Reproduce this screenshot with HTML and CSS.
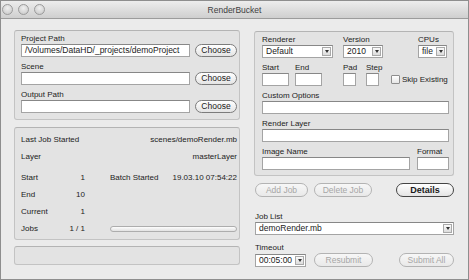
FILE: index.html
```html
<!DOCTYPE html>
<html lang="en">
<head>
    <meta charset="UTF-8">
    <title>RenderBucket</title>
    <link rel="stylesheet" href="styles.css">
</head>
<body>
    <div class="window">
      <div class="titlebar">
        <div class="lights"><span></span><span></span><span></span></div>
        <div class="title">RenderBucket</div>
        <div></div>
      </div>

      <div class="content">
        <div class="left">
          <div class="group paths">
            <div class="field">
              <label>Project Path</label>
              <div class="row">
                <div class="input path">/Volumes/DataHD/_projects/demoProject</div>
                <div class="btn choose">Choose</div>
              </div>
            </div>
            <div class="field">
              <label>Scene</label>
              <div class="row">
                <div class="input path"></div>
                <div class="btn choose">Choose</div>
              </div>
            </div>
            <div class="field">
              <label>Output Path</label>
              <div class="row">
                <div class="input path"></div>
                <div class="btn choose">Choose</div>
              </div>
            </div>
          </div>

          <div class="group status">
            <div class="line">
              <span>Last Job Started</span>
              <span class="value">scenes/demoRender.mb</span>
            </div>
            <div class="line">
              <span>Layer</span>
              <span class="value">masterLayer</span>
            </div>
            <div class="line first">
              <span class="key">Start</span><span class="num">1</span>
              <span class="batch">Batch Started</span>
              <span class="value">19.03.10 07:54:22</span>
            </div>
            <div class="line">
              <span class="key">End</span><span class="num">10</span>
            </div>
            <div class="line">
              <span class="key">Current</span><span class="num">1</span>
            </div>
            <div class="line">
              <span class="key">Jobs</span><span class="num">1 / 1</span>
              <div class="progress"></div>
            </div>
          </div>

          <div class="group statusbar"></div>
        </div>

        <div class="right">
          <div class="group settings">
            <div class="cols">
              <div class="col c-renderer">
                <label>Renderer</label>
                <div class="select s-renderer"><span>Default</span><i></i></div>
              </div>
              <div class="col c-version">
                <label>Version</label>
                <div class="select s-version"><span>2010</span><i></i></div>
              </div>
              <div class="col">
                <label>CPUs</label>
                <div class="select s-cpus"><span>file</span><i></i></div>
              </div>
            </div>

            <div class="cols">
              <div class="col c-start">
                <label>Start</label>
                <div class="input frame"></div>
              </div>
              <div class="col c-end">
                <label>End</label>
                <div class="input frame"></div>
              </div>
              <div class="col c-pad">
                <label>Pad</label>
                <div class="input tiny"></div>
              </div>
              <div class="col c-step">
                <label>Step</label>
                <div class="input tiny"></div>
              </div>
              <div class="skip">
                <span class="checkbox"></span>
                <span>Skip Existing</span>
              </div>
            </div>

            <div class="field">
              <label>Custom Options</label>
              <div class="input full"></div>
            </div>

            <div class="field">
              <label>Render Layer</label>
              <div class="input full"></div>
            </div>

            <div class="cols">
              <div class="col c-image">
                <label>Image Name</label>
                <div class="input image"></div>
              </div>
              <div class="col">
                <label>Format</label>
                <div class="input format"></div>
              </div>
            </div>
          </div>

          <div class="actions">
            <div class="btn disabled add">Add Job</div>
            <div class="btn disabled delete">Delete Job</div>
            <div class="btn details">Details</div>
          </div>

          <label class="outer">Job List</label>
          <div class="select joblist"><span>demoRender.mb</span><i></i></div>

          <label class="outer timeout-label">Timeout</label>
          <div class="actions bottom">
            <div class="select s-timeout"><span>00:05:00</span><i></i></div>
            <div class="btn disabled resubmit">Resubmit</div>
            <div class="btn disabled submit">Submit All</div>
          </div>
        </div>
      </div>
    </div>
</body>
</html>
```

FILE: styles.css
```css
* {
    box-sizing: border-box;
}

body {
    margin: 0;
    font-family: "Liberation Sans", Arial, sans-serif;
    font-size: 8px;
    color: #222;
    background: #fff;
}

.window {
    width: 469px;
    height: 280px;
    background: #ebebeb;
    border: 1px solid #8e8e8e;
    display: flex;
    flex-direction: column;
}

/* title bar */
.titlebar {
    height: 18px;
    flex: none;
    background: linear-gradient(#ededed, #cfcfcf);
    border-bottom: 1px solid #9c9c9c;
    display: grid;
    grid-template-columns: 1fr auto 1fr;
    align-items: center;
}

.lights {
    display: flex;
    gap: 5px;
    padding-left: 1px;
}

.lights span {
    width: 11px;
    height: 11px;
    border-radius: 50%;
    border: 1px solid #9b9b9b;
    background: radial-gradient(circle at 50% 35%, #f0f0f0, #c4c4c4);
}

.title {
    font-size: 8.5px;
    color: #3e3e3e;
}

/* main area */
.content {
    display: flex;
    gap: 14px;
    padding: 11px 14px 0 13px;
}

.left {
    width: 226px;
    display: flex;
    flex-direction: column;
}

.right {
    width: 200px;
    display: flex;
    flex-direction: column;
    padding-top: 1px;
}

.group {
    background: #e3e3e3;
    border: 1px solid #c3c3c3;
    border-top-color: #b4b4b4;
    border-radius: 3px;
}

label {
    display: block;
    height: 11px;
    line-height: 11px;
    color: #1c1c1c;
}

.input {
    height: 13px;
    background: #fff;
    border: 1px solid #a4a4a4;
    border-top-color: #878787;
    font-size: 8.5px;
    line-height: 11px;
    padding: 0 3px;
    white-space: nowrap;
    overflow: hidden;
}

.btn {
    height: 13px;
    border: 1px solid #7c7c7c;
    border-radius: 7px;
    background: linear-gradient(#ffffff, #e4e4e4);
    font-size: 8.5px;
    line-height: 11px;
    text-align: center;
    color: #1a1a1a;
}

.btn.disabled {
    color: #a6a6a6;
    border-color: #b3b3b3;
    background: linear-gradient(#f7f7f7, #e9e9e9);
}

.select {
    height: 13px;
    display: flex;
    align-items: center;
    background: #fff;
    border: 1px solid #a4a4a4;
    border-top-color: #878787;
    font-size: 8.5px;
    padding-left: 3px;
}

.select span {
    flex: 1;
    line-height: 11px;
    white-space: nowrap;
}

.select i {
    width: 9px;
    height: 9px;
    margin-right: 1px;
    border: 1px solid #a9a9a9;
    background: linear-gradient(#fafafa, #dcdcdc);
    display: flex;
    align-items: center;
    justify-content: center;
}

.select i::after {
    content: "";
    border-left: 2px solid transparent;
    border-right: 2px solid transparent;
    border-top: 3px solid #333;
}

/* project paths */
.paths {
    height: 90px;
    padding: 2px 2px 0 6px;
}

.field + .field {
    margin-top: 4px;
}

.row {
    display: flex;
    gap: 5px;
}

.path {
    width: 169px;
}

.choose {
    width: 42px;
}

/* job status */
.status {
    height: 113px;
    margin-top: 7px;
    padding: 3px 2px 0 6px;
}

.line {
    height: 17px;
    display: flex;
    align-items: center;
}

.line.first {
    margin-top: 4px;
}

.key {
    width: 44px;
}

.num {
    width: 20px;
    text-align: right;
}

.batch {
    margin-left: 25px;
}

.value {
    flex: 1;
    text-align: right;
}

.progress {
    flex: 1;
    height: 6px;
    margin-left: 25px;
    border: 1px solid #adadad;
    border-radius: 3px;
    background: linear-gradient(#fdfdfd, #e2e2e2);
}

.statusbar {
    height: 19px;
    margin-top: 6px;
}

/* render settings */
.settings {
    height: 145px;
    padding: 2px 4px 0 7px;
}

.cols {
    display: flex;
    margin-bottom: 4px;
}

.c-renderer { width: 81px; }
.c-version { width: 75px; }
.s-renderer { width: 71px; }
.s-version { width: 40px; }
.s-cpus { width: 29px; }

.c-start { width: 33px; }
.c-end { width: 48px; }
.c-pad { width: 23px; }
.c-step { width: 25px; }
.frame { width: 27px; }
.tiny { width: 13px; }

.skip {
    align-self: flex-end;
    height: 13px;
    display: flex;
    align-items: center;
    gap: 2px;
}

.checkbox {
    width: 9px;
    height: 9px;
    border: 1px solid #8e8e8e;
    background: linear-gradient(#ffffff, #e6e6e6);
    border-radius: 1px;
}

.settings .field {
    margin-bottom: 4px;
}

.settings .field + .field {
    margin-top: 0;
}

.full { width: 187px; }
.c-image { width: 155px; }
.image { width: 148px; }
.format { width: 32px; }

/* buttons and job list */
.actions {
    display: flex;
    align-items: center;
    gap: 6px;
    margin-top: 7px;
    padding-left: 1px;
}

.actions .btn {
    height: 14px;
    line-height: 12px;
}

.add { width: 53px; }
.delete { width: 58px; }

.details {
    width: 58px;
    margin-left: auto;
    border-color: #444;
    font-weight: bold;
    font-size: 9px;
}

.outer {
    margin-top: 14px;
    padding-left: 1px;
}

.joblist {
    width: 199px;
    margin-left: 1px;
}

.timeout-label {
    margin-top: 7px;
}

.bottom {
    margin-top: 0;
}

.s-timeout {
    width: 51px;
    margin-right: 2px;
}

.resubmit { width: 59px; }

.submit {
    width: 55px;
    margin-left: auto;
}
```
